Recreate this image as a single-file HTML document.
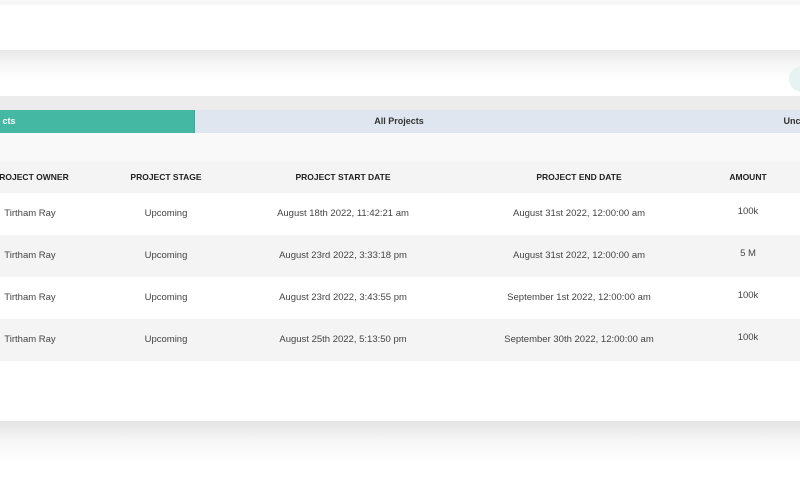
<!DOCTYPE html>
<html><head><style>
body{margin:0;width:800px;height:500px;overflow:hidden;background:#fff;font-family:"Liberation Sans",sans-serif;position:relative}
.a{position:absolute;left:0;width:800px}
.t{position:absolute;font-size:9.5px;color:#444;white-space:nowrap;transform:translateX(-50%)}
.h{font-weight:bold;font-size:8.5px;color:#222}
</style></head><body>
<div class="a" style="top:0;height:5px;background:#f7f7f7"></div>
<div class="a" style="top:50px;height:46px;background:linear-gradient(#e8e8e8,#f6f6f6 30%,#fff 70%,#fff)"></div>
<div style="position:absolute;left:789px;top:66px;width:26px;height:26px;border-radius:50%;background:#e6f3f0"></div>
<div class="a" style="top:96px;height:14px;background:#ececec"></div>
<div class="a" style="top:110px;height:23px;background:#dfe6f0"></div>
<div style="position:absolute;left:0;top:110px;width:194px;height:23px;background:#45b8a4;border-right:1px solid #3aa892"></div>
<div class="t" style="left:9px;top:116px;color:#fff;font-weight:bold;font-size:9px">cts</div>
<div class="t h" style="left:399px;top:116px;font-weight:bold;font-size:9px;color:#333">All Projects</div>
<div class="t h" style="left:792px;top:116px;font-size:9px;color:#333">Unc</div>
<div class="a" style="top:133px;height:28px;background:#f9f9f9"></div>
<div class="a" style="top:161px;height:32px;background:#f4f4f4"></div>
<div class="a" style="top:235px;height:42px;background:#f4f4f4"></div>
<div class="a" style="top:319px;height:42px;background:#f4f4f4"></div>
<div class="a" style="top:421px;height:40px;background:linear-gradient(#e4e4e4,#f6f6f6 50%,#fff)"></div>
<div class="t h" style="left:34px;top:172px">ROJECT OWNER</div>
<div class="t h" style="left:166px;top:172px">PROJECT STAGE</div>
<div class="t h" style="left:343px;top:172px">PROJECT START DATE</div>
<div class="t h" style="left:579px;top:172px">PROJECT END DATE</div>
<div class="t h" style="left:748px;top:172px">AMOUNT</div>

<div class="t" style="left:30px;top:208px">Tirtham Ray</div>
<div class="t" style="left:166px;top:208px">Upcoming</div>
<div class="t" style="left:343px;top:208px">August 18th 2022, 11:42:21 am</div>
<div class="t" style="left:579px;top:208px">August 31st 2022, 12:00:00 am</div>
<div class="t" style="left:748px;top:206px">100k</div>

<div class="t" style="left:30px;top:250px">Tirtham Ray</div>
<div class="t" style="left:166px;top:250px">Upcoming</div>
<div class="t" style="left:343px;top:250px">August 23rd 2022, 3:33:18 pm</div>
<div class="t" style="left:579px;top:250px">August 31st 2022, 12:00:00 am</div>
<div class="t" style="left:748px;top:248px">5 M</div>

<div class="t" style="left:30px;top:292px">Tirtham Ray</div>
<div class="t" style="left:166px;top:292px">Upcoming</div>
<div class="t" style="left:343px;top:292px">August 23rd 2022, 3:43:55 pm</div>
<div class="t" style="left:579px;top:292px">September 1st 2022, 12:00:00 am</div>
<div class="t" style="left:748px;top:290px">100k</div>

<div class="t" style="left:30px;top:334px">Tirtham Ray</div>
<div class="t" style="left:166px;top:334px">Upcoming</div>
<div class="t" style="left:343px;top:334px">August 25th 2022, 5:13:50 pm</div>
<div class="t" style="left:579px;top:334px">September 30th 2022, 12:00:00 am</div>
<div class="t" style="left:748px;top:332px">100k</div>
</body></html>
